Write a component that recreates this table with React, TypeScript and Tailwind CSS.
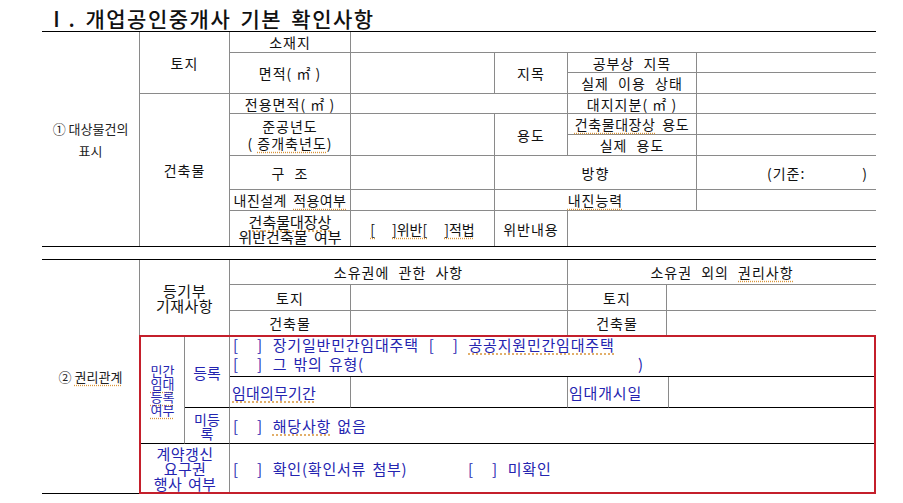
import React from "react";

const G = "border-[#8a8a8a]";
const U = "underline decoration-dotted decoration-[#d9953a] underline-offset-[3px]";

function Cell({
  className = "",
  left = false,
  children,
}: {
  className?: string;
  left?: boolean;
  children?: React.ReactNode;
}) {
  const align = left ? "justify-start text-left" : "justify-center text-center";
  return (
    <div className={`flex items-center leading-none whitespace-pre ${align} ${className}`}>{children}</div>
  );
}

// 체크박스 괄호 [   ]
function Box({ w = "w-[18px]" }: { w?: string }) {
  return (
    <span className="inline-flex">
      <span>[</span>
      <span className={`inline-block ${w}`} />
      <span>]</span>
    </span>
  );
}

// Ⅰ. 대상물건의 표시
function PropertyTable() {
  return (
    <div className="ml-[42px] grid w-[834px] grid-cols-[98px_90px_121px_144px_73px_129px_179px] grid-rows-[21px_20px_21px_20px_21px_21px_34px_21px_35px] border-t border-b border-black text-[14px] tracking-[1px] text-[#111] [word-spacing:5px]">
      <Cell className={`col-start-1 row-start-1 row-span-9 flex-col gap-[9px] border-r ${G} text-[13px] tracking-normal text-[#222] [word-spacing:0px]`}>
        <span>① 대상물건의</span>
        <span>표시</span>
      </Cell>

      <Cell className={`col-start-2 row-start-1 row-span-3 border-r border-b ${G}`}>토지</Cell>
      <Cell className={`col-start-3 row-start-1 border-r border-b ${G}`}>소재지</Cell>
      <Cell className={`col-start-4 col-span-4 row-start-1 border-b ${G}`} />

      <Cell className={`col-start-3 row-start-2 row-span-2 border-r border-b ${G} [word-spacing:0px]`}>면적( ㎡ )</Cell>
      <Cell className={`col-start-4 row-start-2 row-span-2 border-r border-b ${G}`} />
      <Cell className={`col-start-5 row-start-2 row-span-2 border-r border-b ${G}`}>지목</Cell>
      <Cell className={`col-start-6 row-start-2 border-r border-b ${G}`}>공부상 지목</Cell>
      <Cell className={`col-start-7 row-start-2 border-b ${G}`} />
      <Cell className={`col-start-6 row-start-3 border-r border-b ${G}`}>실제 이용 상태</Cell>
      <Cell className={`col-start-7 row-start-3 border-b ${G}`} />

      <Cell className={`col-start-2 row-start-4 row-span-6 border-r ${G}`}>건축물</Cell>
      <Cell className={`col-start-3 row-start-4 border-r border-b ${G} [word-spacing:0px]`}>전용면적( ㎡ )</Cell>
      <Cell className={`col-start-4 col-span-2 row-start-4 border-r border-b ${G}`} />
      <Cell className={`col-start-6 row-start-4 border-r border-b ${G} [word-spacing:0px]`}>대지지분( ㎡ )</Cell>
      <Cell className={`col-start-7 row-start-4 border-b ${G}`} />

      <Cell className={`col-start-3 row-start-5 row-span-2 flex-col gap-[3px] border-r border-b ${G} [word-spacing:0px]`}>
        <span>준공년도</span>
        <span>
          ( <span className={U}>증개축년도</span>)
        </span>
      </Cell>
      <Cell className={`col-start-4 row-start-5 row-span-2 border-r border-b ${G}`} />
      <Cell className={`col-start-5 row-start-5 row-span-2 border-r border-b ${G}`}>용도</Cell>
      <Cell className={`col-start-6 row-start-5 border-r border-b ${G} tracking-[0.6px] [word-spacing:3px]`}>
        <span className={U}>건축물대장상</span> 용도
      </Cell>
      <Cell className={`col-start-7 row-start-5 border-b ${G}`} />
      <Cell className={`col-start-6 row-start-6 border-r border-b ${G}`}>실제 용도</Cell>
      <Cell className={`col-start-7 row-start-6 border-b ${G}`} />

      <Cell className={`col-start-3 row-start-7 border-r border-b ${G}`}>구 조</Cell>
      <Cell className={`col-start-4 row-start-7 border-r border-b ${G}`} />
      <Cell className={`col-start-5 col-span-2 row-start-7 border-r border-b ${G}`}>방향</Cell>
      <Cell left className={`col-start-7 row-start-7 border-b pl-[70px] ${G}`}>
        <span className="flex w-[101px] justify-between">
          <span>(기준:</span>
          <span>)</span>
        </span>
      </Cell>

      <Cell className={`col-start-3 row-start-8 border-r border-b ${G} tracking-[0.4px] [word-spacing:3px]`}>
        내진설계 <span className={U}>적용여부</span>
      </Cell>
      <Cell className={`col-start-4 row-start-8 border-r border-b ${G}`} />
      <Cell className={`col-start-5 col-span-2 row-start-8 border-r border-b ${G}`}>
        <span className={U}>내진능력</span>
      </Cell>
      <Cell className={`col-start-7 row-start-8 border-b ${G}`} />

      <Cell className={`col-start-3 row-start-9 flex-col border-r ${G} text-[15px] tracking-normal leading-[15px] [word-spacing:3px]`}>
        <span className={U}>건축물대장상</span>
        <span>위반건축물 여부</span>
      </Cell>
      <Cell className={`col-start-4 row-start-9 border-r ${G} tracking-normal`}>
        <span className={`inline-flex ${U}`}>
          <Box w="w-[17px]" />
          위반
          <Box w="w-[17px]" />
          적법
        </span>
      </Cell>
      <Cell className={`col-start-5 row-start-9 border-r ${G}`}>위반내용</Cell>
      <Cell className="col-start-6 col-span-2 row-start-9" />
    </div>
  );
}

// ② 권리관계
function RightsTable() {
  const B = "text-[#2424b0] text-[15px] tracking-[0.8px]";
  return (
    <div className="ml-[42px] mt-[12px] flex w-[834px] border-t border-black text-[14px] tracking-[1px] text-[#111] [word-spacing:5px]">
      <div className="flex w-[97px] shrink-0 items-center justify-center border-b border-black text-[13px] tracking-normal text-[#222] [word-spacing:0px]">
        <span>
          ② <span className={U}>권리관계</span>
        </span>
      </div>

      <div className="flex w-[737px] flex-col">
        <div className={`grid grid-cols-[90px_121px_217px_99px_209px] grid-rows-[25px_26px_24px] border-l ${G}`}>
          <Cell className={`col-start-1 row-start-1 row-span-3 flex-col border-r ${G} text-[15px] leading-[15px] tracking-[0.5px]`}>
            <span>등기부</span>
            <span>기재사항</span>
          </Cell>
          <Cell className={`col-start-2 col-span-2 row-start-1 border-r border-b ${G}`}>소유권에 관한 사항</Cell>
          <Cell className={`col-start-4 col-span-2 row-start-1 border-b ${G}`}>
            소유권 외의 <span className={U}>권리사항</span>
          </Cell>
          <Cell className={`col-start-2 row-start-2 border-r border-b ${G}`}>토지</Cell>
          <Cell className={`col-start-3 row-start-2 border-r border-b ${G}`} />
          <Cell className={`col-start-4 row-start-2 border-r border-b ${G}`}>토지</Cell>
          <Cell className={`col-start-5 row-start-2 border-b ${G}`} />
          <Cell className={`col-start-2 row-start-3 border-r ${G}`}>건축물</Cell>
          <Cell className={`col-start-3 row-start-3 border-r ${G}`} />
          <Cell className={`col-start-4 row-start-3 border-r ${G}`}>건축물</Cell>
          <Cell className="col-start-5 row-start-3" />
        </div>

        <div className={`grid grid-cols-[44px_45px_121px_217px_101px_205px] grid-rows-[40px_31px_36px_48px] border-2 border-[#c41f2b] ${B} [word-spacing:2px]`}>
          <Cell className={`col-start-1 row-start-1 row-span-3 flex-col border-r border-b ${G} border-b-black text-[13px] leading-[15px] tracking-normal`}>
            <span>민간</span>
            <span className={U}>임대</span>
            <span className={U}>등록</span>
            <span className={U}>여부</span>
          </Cell>
          <Cell className={`col-start-2 row-start-1 row-span-2 border-r border-b ${G} border-b-black tracking-normal`}>
            등록
          </Cell>
          <Cell left className="col-start-3 col-span-4 row-start-1 flex-col items-start justify-center gap-[4px] border-b border-black pl-[3px]">
            <span className="flex items-center gap-[10px]">
              <Box />
              <span>장기일반민간임대주택</span>
              <Box />
              <span className={U}>공공지원민간임대주택</span>
            </span>
            <span className="flex items-center gap-[10px]">
              <Box />
              <span>
                그 밖의 유형(<span className="inline-block w-[274px]" />)
              </span>
            </span>
          </Cell>
          <Cell left className={`col-start-3 row-start-2 border-r border-b ${G} border-b-black pl-[2px] tracking-[0.2px]`}>
            <span className={U}>임대의무기간</span>
          </Cell>
          <Cell className={`col-start-4 row-start-2 border-r border-b ${G} border-b-black`} />
          <Cell left className={`col-start-5 row-start-2 border-r border-b ${G} border-b-black pl-[1px]`}>
            임대개시일
          </Cell>
          <Cell className="col-start-6 row-start-2 border-b border-black" />

          <Cell className={`col-start-2 row-start-3 flex-col border-r border-b ${G} border-b-black text-[14px] leading-[15px] tracking-normal`}>
            <span>미등</span>
            <span>록</span>
          </Cell>
          <Cell left className="col-start-3 col-span-4 row-start-3 gap-[10px] border-b border-black pl-[3px]">
            <Box />
            <span>
              <span className={U}>해당사항</span> 없음
            </span>
          </Cell>

          <Cell className={`col-start-1 col-span-2 row-start-4 flex-col border-r ${G} leading-[17px] tracking-[0.4px]`}>
            <span>계약갱신</span>
            <span>요구권</span>
            <span>행사 여부</span>
          </Cell>
          <Cell left className="col-start-3 col-span-4 row-start-4 pl-[3px]">
            <span className="flex w-[235px] items-center gap-[10px]">
              <Box />
              <span>확인(확인서류 첨부)</span>
            </span>
            <span className="flex items-center gap-[10px]">
              <Box />
              <span>미확인</span>
            </span>
          </Cell>
        </div>
      </div>
    </div>
  );
}

export default function App() {
  return (
    <div className="h-[503px] w-[903px] overflow-hidden bg-white font-['Noto_Sans_CJK_KR','Liberation_Sans',sans-serif]">
      <div className="flex h-[31px] items-end pb-[2px] pl-[46px] text-[21px] font-medium leading-none tracking-[1.5px] text-[#111] [word-spacing:3px]">
        Ⅰ. 개업공인중개사 기본 확인사항
      </div>
      <PropertyTable />
      <RightsTable />
    </div>
  );
}
